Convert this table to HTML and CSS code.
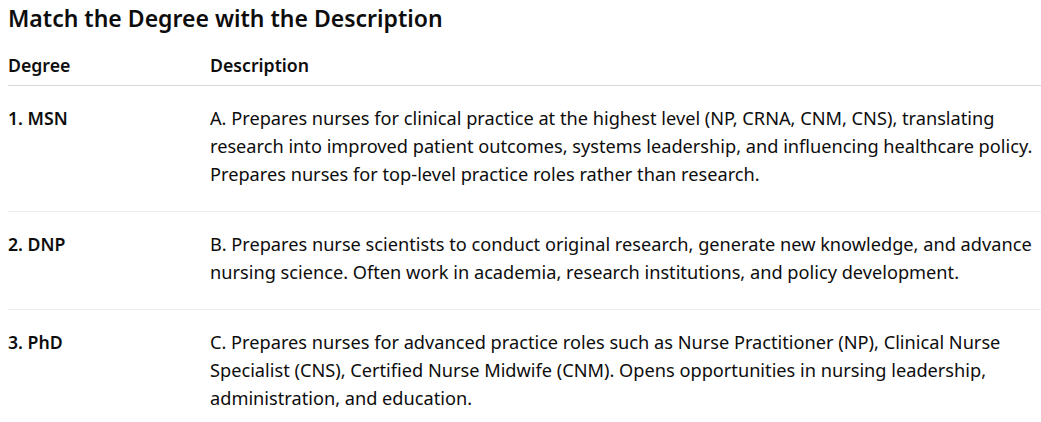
FILE: index.html
```html
<!DOCTYPE html>
<html lang="en">
<head>
<meta charset="utf-8">
<title>Match the Degree with the Description</title>
<link rel="stylesheet" href="styles.css">
</head>
<body>
<main class="page">
  <h2 class="title">Match the Degree with the Description</h2>
  <table class="match">
    <thead>
      <tr>
        <th class="col-degree">Degree</th>
        <th>Description</th>
      </tr>
    </thead>
    <tbody>
      <tr>
        <td class="degree">1. MSN</td>
        <td class="desc">A. Prepares nurses for clinical practice at the highest level (NP, CRNA, CNM, CNS), translating research into improved patient outcomes, systems leadership, and influencing healthcare policy. Prepares nurses for top-level practice roles rather than research.</td>
      </tr>
      <tr>
        <td class="degree">2. DNP</td>
        <td class="desc">B. Prepares nurse scientists to conduct original research, generate new knowledge, and advance nursing science. Often work in academia, research institutions, and policy development.</td>
      </tr>
      <tr>
        <td class="degree">3. PhD</td>
        <td class="desc">C. Prepares nurses for advanced practice roles such as Nurse Practitioner (NP), Clinical Nurse Specialist (CNS), Certified Nurse Midwife (CNM). Opens opportunities in nursing leadership, administration, and education.</td>
      </tr>
    </tbody>
  </table>
</main>
</body>
</html>
```

FILE: styles.css
```css
html, body {
  margin: 0;
  padding: 0;
  background: #ffffff;
}

body {
  font-family: "Noto Sans", "Open Sans", sans-serif;
  color: #0d0d0d;
  font-size: 18px;
  line-height: 28px;
}

.page {
  padding: 4px 0 0 8px;
}

.title {
  margin: 0 0 13px 0;
  font-size: 23px;
  line-height: 28px;
  font-weight: 600;
}

.match {
  width: 100%;
  border-collapse: collapse;
}

.match th {
  text-align: left;
  font-size: 17.7px;
  font-weight: 600;
  padding: 6px 8px 6px 0;
  border-bottom: 1px solid #d9d9d9;
  vertical-align: top;
}

.match .col-degree {
  width: 194px;
}

.match td {
  padding: 18px 8px 23px 0;
  border-bottom: 1px solid #ececec;
  vertical-align: top;
}

.match tbody tr:last-child td {
  border-bottom: none;
}

.match .degree {
  font-size: 17.7px;
  font-weight: 600;
}

.match .desc {
  font-size: 18.2px;
}
```
